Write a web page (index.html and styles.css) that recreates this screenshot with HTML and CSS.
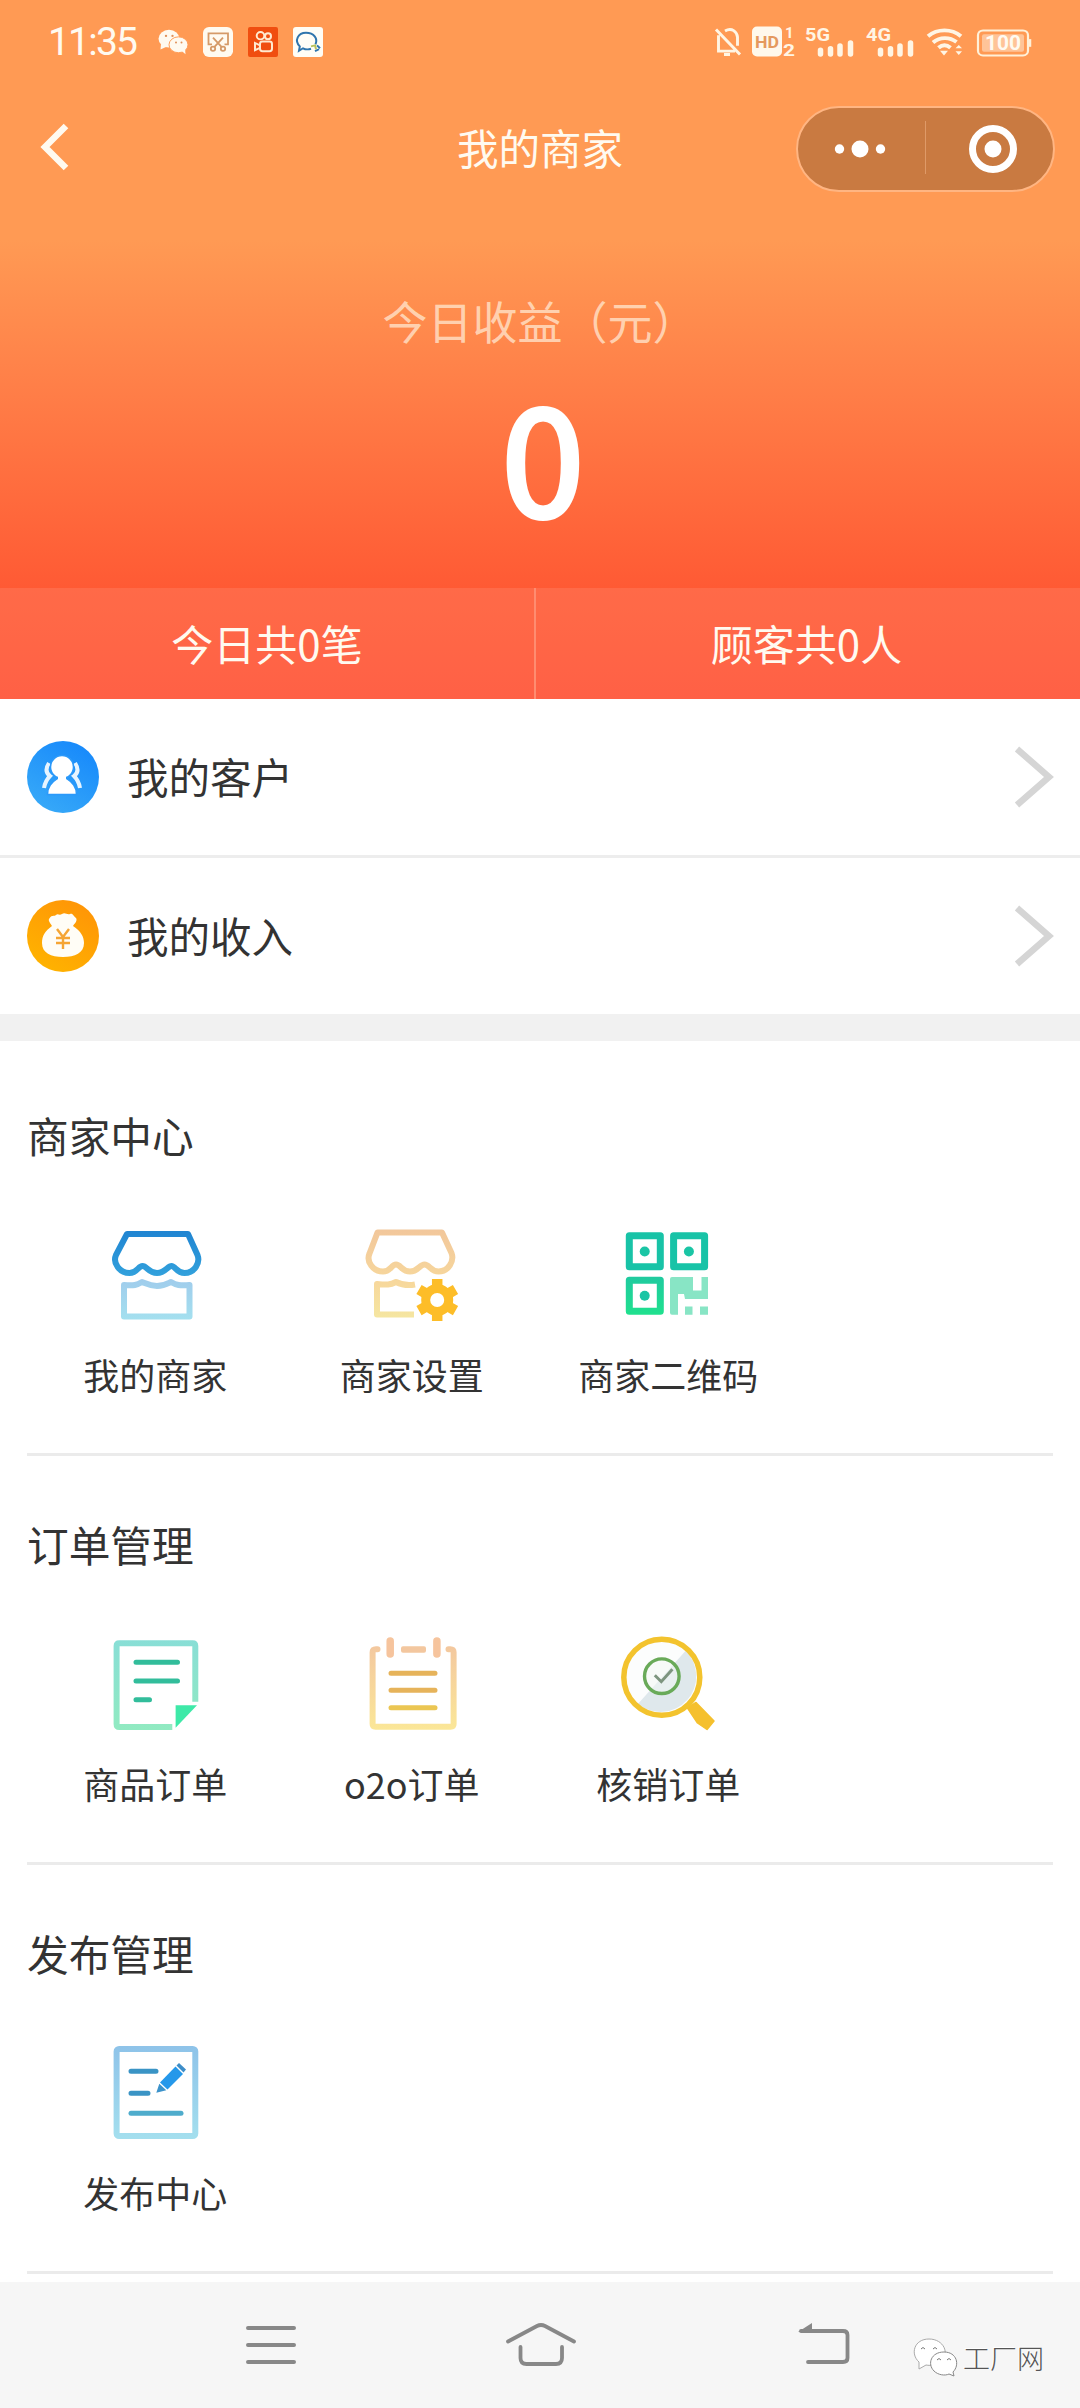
FILE: index.html
```html
<!DOCTYPE html>
<html lang="zh-CN">
<head>
<meta charset="utf-8">
<title>我的商家</title>
<link rel="stylesheet" href="styles.css">
</head>
<body>
<div class="screen">
  <header class="hero">
    <div class="statusbar">
      <span class="clock">11:35</span>
      <svg class="st-wechat" width="30" height="28" viewBox="0 0 30 30" preserveAspectRatio="none">
        <ellipse cx="11" cy="11.5" rx="10.5" ry="9.5" fill="#fffaf0"/><path d="M3 17l-.5 6 6-3z" fill="#fffaf0"/>
        <ellipse cx="20.500" cy="18" rx="9.500" ry="8.500" fill="#fffaf0" stroke="#ff9a54"/><path d="M24 25l3.500 3-.5-6z" fill="#fffaf0"/>
        <g fill="#e0905a"><circle cx="8" cy="8.500" r="1.200"/><circle cx="14.500" cy="8.500" r="1.200"/><circle cx="18" cy="15.500" r="1"/><circle cx="23.500" cy="15.500" r="1"/></g>
      </svg>
      <svg class="st-app" width="30" height="30" viewBox="0 0 30 31" preserveAspectRatio="none">
        <rect width="30" height="31" rx="6" fill="#fffaf0"/>
        <g fill="none" stroke="#d59a68" stroke-width="1.800"><path d="M9 18H5.500V6.500H25V18h-3.500M10 11l9 10M20 11l-9 10"/><circle cx="10" cy="22.500" r="2.200"/><circle cx="20" cy="22.500" r="2.200"/></g>
      </svg>
      <svg class="st-app" width="30" height="30" viewBox="0 0 30 31" preserveAspectRatio="none">
        <rect width="30" height="31" rx="2" fill="#f04e10"/>
        <g fill="none" stroke="#ffe9cf" stroke-width="2"><circle cx="12.500" cy="9" r="3.800"/><circle cx="20" cy="9.500" r="3"/><rect x="12" y="15" width="12" height="10" rx="2.500"/><path d="M12 19l-5-2.500v7.500l5-2.500"/></g>
      </svg>
      <svg class="st-app" width="30" height="30" viewBox="0 0 30 31" preserveAspectRatio="none">
        <rect width="30" height="31" rx="3" fill="#fffdf6"/>
        <path d="M18 22.500c-3 1-6 .6-8-.5l-4 2.500.8-4.500C1 14 5 6 13 6s12 6 9.500 12" fill="none" stroke="#2f75ad" stroke-width="2"/>
        <path d="M18 20l4-1 1 4" stroke="#b9c25a" stroke-width="2" fill="none"/><path d="M22 25l4-2M24 19l3 3" stroke="#2f75ad" stroke-width="2"/>
      </svg>
      <svg class="st-system" width="320" height="52" viewBox="714 17 320 54" preserveAspectRatio="none">
        <g fill="none" stroke="#fff5e4" stroke-width="2.900"><path d="M717 31l24 26M719.500 37v16.500H736M726 32.500c7-4 12 1 12.500 6.500v9M725 57h6"/></g>
        <rect x="753" y="28" width="30" height="31" rx="5" fill="#fff8ec"/>
        <g font-family="Roboto, sans-serif" font-weight="700">
          <text x="768" y="50" font-size="18" fill="#e5995f" text-anchor="middle" textLength="24" lengthAdjust="spacingAndGlyphs">HD</text>
          <g fill="#fff5e4"><text x="786" y="40" font-size="15">1</text><text x="784" y="59" font-size="17" textLength="12" lengthAdjust="spacingAndGlyphs">2</text>
          <text x="806" y="43" font-size="20" textLength="25" lengthAdjust="spacingAndGlyphs">5G</text>
          <text x="867" y="43" font-size="20" textLength="25" lengthAdjust="spacingAndGlyphs">4G</text></g>
        </g>
        <g stroke="#fff5e4" stroke-width="5.500" stroke-linecap="round"><path d="M821.500 52.500v4M831.500 51v5.500M841 48v8.500M851.500 45v11.500M881.500 52.500v4M891.500 51v5.500M901 48v8.500M911.500 45v11.500"/></g>
        <g fill="none" stroke="#fff5e4" stroke-width="4"><path d="M929 38c9.500-8 23.500-8 33 0M934 44.500c7-6 16.500-6 23.500-.5M939.500 50c4-3.500 8-3.500 12 0"/></g>
        <path d="M941 53h8l-4 5zM956.500 50.500h6.500l-3.200-3.500zM956.500 53.500h6.500l-3.200 4z" fill="#fff5e4"/>
        <rect x="979" y="32" width="50" height="26" rx="5" fill="none" stroke="#fff0d8" stroke-width="2.200"/><rect x="983" y="36" width="42" height="18" rx="2" fill="#ffc498"/><path d="M1031 41v8" stroke="#fff0d8" stroke-width="2.500"/>
        <text x="1004" y="52.500" font-family="Roboto, sans-serif" font-weight="700" font-size="21" fill="#fffaf0" text-anchor="middle" textLength="36" lengthAdjust="spacingAndGlyphs">100</text>
      </svg>
    </div>
    <nav class="navbar">
      <svg class="back" width="30" height="48" viewBox="0 0 30 48"><path d="M27 3L6 24 27 45" fill="none" stroke="#fffaf0" stroke-width="6.500"/></svg>
      <h1 class="title">我的商家</h1>
      <div class="capsule">
        <svg width="256" height="82" viewBox="798 113 256 82"><g fill="#fff"><circle cx="839.500" cy="154" r="4.700"/><circle cx="860" cy="154" r="8.500"/><circle cx="880.500" cy="154" r="4.700"/><circle cx="993" cy="154" r="8.500"/></g><circle cx="993" cy="154" r="20.500" fill="none" stroke="#fff" stroke-width="7"/><path d="M925.500 126v53" stroke="#df9a68"/></svg>
      </div>
    </nav>
    <div class="income-label">今日收益（元）</div>
    <div class="income">0</div>
    <div class="stats">
      <div class="stat stat-orders">今日共0笔</div>
      <div class="stat stat-guests">顾客共0人</div>
    </div>
  </header>

  <div class="row">
    <svg class="row-icon" width="72" height="72" viewBox="0 0 72 72">
      <defs><linearGradient id="blue" x1=".8" y1="0" x2=".2" y2="1"><stop offset="0" stop-color="#1688fb"/><stop offset="1" stop-color="#38aaf8"/></linearGradient></defs>
      <circle cx="36" cy="36" r="36" fill="url(#blue)"/>
      <g fill="none" stroke="#e6f4ff" stroke-width="4"><path d="M22 22c-4 6-3 10 1 13-3 3-5 6-6 12M48 22c4 6 3 10-1 13 3 3 5 6 6 12"/></g>
      <g fill="#fff" stroke="#2b99fa" stroke-width="1.500"><path d="M20.500 53.500c0-8 4-12 10-16h9c6 4 10 8 10 16z"/><circle cx="35" cy="26" r="11.500"/></g><path d="M31 34h8v6h-8z" fill="#fff"/>
    </svg>
    <span class="row-text">我的客户</span>
    <svg class="chevron" width="40" height="62" viewBox="0 0 40 62"><path d="M3 3l32 28L3 59" fill="none" stroke="#d5d5d5" stroke-width="6.500"/></svg>
  </div>
  <div class="row row-last">
    <svg class="row-icon" width="72" height="72" viewBox="0 0 72 72">
      <defs><linearGradient id="amber" x1=".8" y1="0" x2=".2" y2="1"><stop offset="0" stop-color="#ff9407"/><stop offset="1" stop-color="#ffb400"/></linearGradient></defs>
      <circle cx="36" cy="36" r="36" fill="url(#amber)"/>
      <path d="M22 19c3-5 5-2 7-4s3 1 6-1 5 1 8 0 3 2 6 4c2 3-2 6-3 8 8 5 11 11 11 17 0 10-9 14-21 14S15 53 15 43c0-7 3-12 10-17-1-2-4-5-3-7z" fill="#fffdf6"/>
      <path d="M30 29l6 8 6-8M36 37v12M29 38h14M29 43h14" fill="none" stroke="#f5a534" stroke-width="2.400"/>
    </svg>
    <span class="row-text">我的收入</span>
    <svg class="chevron" width="40" height="62" viewBox="0 0 40 62"><path d="M3 3l32 28L3 59" fill="none" stroke="#d5d5d5" stroke-width="6.500"/></svg>
  </div>
  <div class="band"></div>

  <main class="sections">
    <section class="section">
      <h2 class="section-title">商家中心</h2>
      <div class="grid">
        <div class="item">
          <svg width="110" height="110" viewBox="0 0 110 110">
            <defs><linearGradient id="g1" gradientUnits="userSpaceOnUse" x1="0" y1="12" x2="0" y2="56"><stop offset="0" stop-color="#2085d2"/><stop offset="1" stop-color="#32a1dc"/></linearGradient><linearGradient id="g2" gradientUnits="userSpaceOnUse" x1="0" y1="60" x2="0" y2="100"><stop offset="0" stop-color="#a0cdec"/><stop offset="1" stop-color="#a4e0ef"/></linearGradient></defs>
            <path d="M27 14H88L97.500 35c3 8-3 18-13 18-8 0-9-7-13-7s-6 7-14.500 7-10-7-14.500-7-5 7-13 7c-10 0-17-10-13.500-18z" fill="none" stroke="url(#g1)" stroke-width="6" stroke-linejoin="round"/>
            <path d="M24 65c10 1 13 0 18-3 5 2 8 4 15 4s10-2 14-4c5 3 9 4 18.500 3v31.500H24z" fill="none" stroke="url(#g2)" stroke-width="6" stroke-linejoin="round"/>
          </svg>
          <span class="label">我的商家</span>
        </div>
        <div class="item">
          <svg width="110" height="110" viewBox="0 0 110 110">
            <defs><linearGradient id="g3" gradientUnits="userSpaceOnUse" x1="0" y1="10" x2="0" y2="98"><stop offset="0" stop-color="#f2c79b"/><stop offset=".6" stop-color="#f7d89c"/><stop offset="1" stop-color="#f5e6a1"/></linearGradient></defs>
            <g fill="none" stroke="url(#g3)" stroke-width="6" stroke-linejoin="round"><path d="M20.500 12.500H85L94.500 33c3 8-3 18.500-13 18.500-8 0-9-7-14-7s-6 7-14.500 7-9-7-14-7-5 7-13 7c-10 0-17-10-13.500-18z"/>
            <path d="M58 64.500c-8 1.500-13 .5-19-2.500-6 3-9 3-19 2v30.500h37"/></g>
            <g fill="none" stroke="#fdbd28"><circle cx="80.200" cy="80" r="11.500" stroke-width="9"/><path d="M80.200 59v9M80.200 92v9M62 69.500l8 4.600M90.500 86l8 4.600M98.500 69.500l-8 4.600M70 86l-8 4.600" stroke-width="10.500"/></g>
          </svg>
          <span class="label">商家设置</span>
        </div>
        <div class="item">
          <svg width="110" height="110" viewBox="0 0 110 110">
            <defs><linearGradient id="g4" gradientUnits="userSpaceOnUse" x1="0" y1="55" x2="0" y2="97"><stop offset="0" stop-color="#1fc9a0"/><stop offset="1" stop-color="#20e28d"/></linearGradient></defs>
            <g fill="none" stroke="#18c3a7" stroke-width="7" stroke-linejoin="round"><rect x="16.300" y="15.800" width="31" height="31"/><rect x="60.600" y="15.800" width="31" height="31"/><rect x="16.300" y="60.200" width="31" height="31" stroke="url(#g4)"/></g>
            <g fill="#1ac5a5"><circle cx="31.700" cy="31.500" r="5"/><circle cx="75.900" cy="31.500" r="5"/><circle cx="31.700" cy="75.800" r="5"/></g>
            <path d="M59 57H80v13.500h8.500V57H95v22H72l-1-5h-6v20.700h-6q-2 0-2-2V59q0-2 2-2zM72 86.500h7.500v8.200H72zM87 86.500h8v8.200h-8z" fill="#88e5c5"/>
          </svg>
          <span class="label">商家二维码</span>
        </div>
      </div>
    </section>
    <section class="section">
      <h2 class="section-title">订单管理</h2>
      <div class="grid">
        <div class="item">
          <svg width="110" height="110" viewBox="0 0 110 110">
            <defs><linearGradient id="g5" gradientUnits="userSpaceOnUse" x1="0" y1="10" x2="0" y2="101"><stop offset="0" stop-color="#88ded6"/><stop offset="1" stop-color="#91eac1"/></linearGradient></defs>
            <path d="M95.300 72.700V17q0-2.700-2.700-2.700H19.300q-2.700 0-2.700 2.700v78q0 3 2.700 3h53" fill="none" stroke="url(#g5)" stroke-width="6"/>
            <path d="M36 33.300h41.500M36 52h41.500M36 70.700h13.500" stroke="#32bd9b" stroke-width="5" stroke-linecap="round"/>
            <path d="M75.600 76.300H97L75.600 98.700z" fill="#3ee9a8"/>
          </svg>
          <span class="label">商品订单</span>
        </div>
        <div class="item">
          <svg width="110" height="110" viewBox="0 0 110 110">
            <defs><linearGradient id="g6" gradientUnits="userSpaceOnUse" x1="0" y1="15" x2="0" y2="101"><stop offset="0" stop-color="#f3c79f"/><stop offset="1" stop-color="#fbe798"/></linearGradient></defs>
            <path d="M20.500 20.300h-1.500q-3.400 0-3.400 3V95q0 2.700 3 2.700h75q3 0 3-2.700V23.300q0-3-3.400-3h-1.700" fill="none" stroke="url(#g6)" stroke-width="6" stroke-linecap="round"/>
            <rect x="44" y="17.300" width="25" height="6.400" rx="2" fill="#f3c79f"/>
            <path d="M33.200 12v13M79.900 12v13" stroke="#f6c49d" stroke-width="7.500" stroke-linecap="round"/>
            <path d="M34 44.300h44M34 61.300h44" stroke="#e6b35a" stroke-width="5" stroke-linecap="round"/><path d="M34 78.700h44" stroke="#ebc653" stroke-width="5" stroke-linecap="round"/>
          </svg>
          <span class="label">o2o订单</span>
        </div>
        <div class="item">
          <svg width="110" height="110" viewBox="0 0 110 110">
            <path d="M74.500 79l8.500-5.500L101 92l-7 8.500-9.500-6.500z" fill="#f5c02e" stroke="#f5c02e" stroke-width="1.500" stroke-linejoin="round"/>
            <circle cx="48.800" cy="48.300" r="36" fill="#fcfdfd"/><path d="M72.700 21.700A35.800 35.800 0 0 1 24.900 74.900z" fill="#dfe8ec"/>
            <circle cx="48.800" cy="48.300" r="38" fill="none" stroke="#f3c32e" stroke-width="5.500"/>
            <circle cx="48.800" cy="47.200" r="17.300" fill="#f1f7f3" fill-opacity=".5" stroke="#69aa59" stroke-width="3.400"/>
            <path d="M41.800 46.300l6.500 6.400 11.100-12.400" fill="none" stroke="#7d957f" stroke-width="3"/>
          </svg>
          <span class="label">核销订单</span>
        </div>
      </div>
    </section>
    <section class="section">
      <h2 class="section-title">发布管理</h2>
      <div class="grid">
        <div class="item">
          <svg width="110" height="110" viewBox="0 0 110 110">
            <defs><linearGradient id="g7" gradientUnits="userSpaceOnUse" x1="0" y1="8" x2="0" y2="101"><stop offset="0" stop-color="#8ec3e9"/><stop offset="1" stop-color="#a4dfee"/></linearGradient></defs>
            <rect x="16.600" y="11" width="78.700" height="87" rx="2.500" fill="none" stroke="url(#g7)" stroke-width="6"/>
            <path d="M31 33.300h25M31 55.300h17" stroke="#3a94c5" stroke-width="5" stroke-linecap="round"/><path d="M31 75.300h50" stroke="#4faccc" stroke-width="5" stroke-linecap="round"/>
            <path d="M60 44.500L75.500 28.500l7.500 7.500L67.500 51.500z" fill="#2598ea"/><path d="M56.300 54.700l3-9 7 6.500z" fill="#3c93cb"/><path d="M76.500 27.500l2.500-2.500 7 6.500-2.500 3z" fill="#3d8dc8"/>
          </svg>
          <span class="label">发布中心</span>
        </div>
      </div>
    </section>
  </main>

  <footer class="sysnav">
    <svg width="52" height="52" viewBox="245 2319 52 52"><path d="M248 2328h46M248 2345h46M248 2362h46" stroke="#888" stroke-width="4" stroke-linecap="round"/></svg>
    <svg width="74" height="52" viewBox="504 2319 74 52"><path d="M508 2341.500l29-15.500q4-2 8 0l29 15.500M520.500 2347v11q0 6 6 6H556q6 0 6-6v-11" fill="none" stroke="#888" stroke-width="3.800" stroke-linecap="round"/></svg>
    <svg width="54" height="52" viewBox="797 2319 54 52"><path d="M801 2331h42q4.500 0 4.500 4v23q0 4-4.500 4h-35" fill="none" stroke="#888" stroke-width="3.800" stroke-linecap="round"/><path d="M798 2332l14-9v9z" fill="#888"/></svg>
    <div class="watermark">
      <svg width="45" height="40" viewBox="0 0 45 40"><g fill="#fff" stroke="#888" stroke-width="1"><path d="M6 24C-3 16 1 1 16 1s21 15 12 22c-4 4-10 5-15 4l-7 4z" stroke="#aaa"/><path d="M40 34c7-7 4-20-9-20s-17 12-10 19c4 4 11 5 15 3l5 2z"/></g><g fill="none" stroke="#777"><path d="M8 11q2-3 4 0M20 11q2-3 4 0M24 22q2-3 4 0M34 22q2-3 4 0"/></g></svg>
      <span>工厂网</span>
    </div>
  </footer>
</div>
</body>
</html>
```
FILE: styles.css
```css
* { box-sizing: border-box; }
body { margin: 0; background: #fff; color: #333; font-family: "Noto Sans CJK SC", sans-serif; }
svg { display: block; flex: none; }
h1, h2 { margin: 0; font-weight: 400; }
.screen { width: 1080px; height: 2408px; display: flex; flex-direction: column; overflow: hidden; }

.hero { height: 699px; display: flex; flex-direction: column; color: #fffaf0;
  background: linear-gradient(#ff9a54 0, #ff9a54 240px, #ff7f48 385px, #ff5a34 588px, #ff4f30 699px); }
.statusbar { height: 84px; padding: 0 47px 0 48px; display: flex; align-items: center; }
.clock { width: 110px; font: 400 39px/40px Roboto, sans-serif; letter-spacing: -1.8px; }
.st-app { margin-left: 15px; }
.st-system { margin-left: auto; overflow: visible; }
.navbar { height: 130px; padding: 0 25px 0 39px; display: grid; grid-template-columns: 259px 1fr 259px; align-items: center; }
.back { margin-top: -4px; }
.title { margin-top: -5px; font-size: 41.5px; line-height: 60px; text-align: center; padding-right: 14px; }
.capsule { width: 259px; height: 86px; border: 2px solid #ffb582; border-radius: 43px; background: #c97a41; overflow: hidden; }
.income-label { margin-top: 74px; font-size: 45px; line-height: 66px; text-align: center; color: rgba(255, 240, 220, .7); }
.income { margin-top: 20px; padding-left: 6px; font-size: 148px; line-height: 160px; font-weight: 500; -webkit-text-stroke: 2px #fff; text-align: center; color: #fff; }
.stats { margin-top: auto; height: 111px; display: flex; background: rgba(255, 255, 255, .1); }
.stat { padding-bottom: 2px; display: flex; align-items: center; justify-content: center; font-size: 42px; }
.stat-orders { width: 536px; border-right: 2px solid #ff8c70; }
.stat-guests { flex: 1; padding-right: 3px; }

.row { height: 159px; padding: 0 26px 0 27px; display: flex; align-items: center; border-bottom: 3px solid #ededed; }
.row-last { height: 156px; border-bottom: 0; }
.row-text { margin: -2px 0 0 28px; font-size: 41.5px; line-height: 60px; }
.chevron { margin-left: auto; }
.band { height: 27px; background: #f1f1f1; }

.sections { height: 1241px; padding: 6px 27px 0; }
.section { height: 409px; padding-top: 58px; border-bottom: 3px solid #ebebeb; }
.section-title { font-size: 41.7px; line-height: 60px; }
.grid { margin-top: 55px; display: grid; grid-template-columns: repeat(4, 1fr); }
.item { display: flex; flex-direction: column; align-items: center; }
.label { margin-top: 19px; font-size: 36px; line-height: 50px; }

.sysnav { flex: 1; padding: 0 36px 0 245px; background: #f6f6f6; display: flex; align-items: center; }
.sysnav > svg + svg { margin-left: 207px; }
.sysnav > svg:nth-child(3) { margin-left: 219px; }
.watermark { margin-left: auto; padding-top: 26px; display: flex; align-items: center; gap: 5px; font-size: 27px; line-height: 36px; font-weight: 300; color: #555; text-shadow: -1px -1px 0 #fff; }
```
